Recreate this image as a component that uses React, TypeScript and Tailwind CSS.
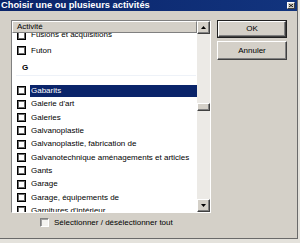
import React from "react";

type Row =
  | { kind: "item"; text: string; selected?: boolean; clipped?: boolean }
  | { kind: "group"; text: string };

const rows: Row[] = [
  { kind: "item", text: "Fusions et acquisitions", clipped: true },
  { kind: "item", text: "Futon" },
  { kind: "group", text: "G" },
  { kind: "item", text: "Gabarits", selected: true },
  { kind: "item", text: "Galerie d'art" },
  { kind: "item", text: "Galeries" },
  { kind: "item", text: "Galvanoplastie" },
  { kind: "item", text: "Galvanoplastie, fabrication de" },
  { kind: "item", text: "Galvanotechnique aménagements et articles" },
  { kind: "item", text: "Gants" },
  { kind: "item", text: "Garage" },
  { kind: "item", text: "Garage, équipements de" },
  { kind: "item", text: "Garnitures d'intérieur" },
];

function ListCheck() {
  return (
    <span className="block w-[9px] h-[9px] shrink-0 border border-black bg-white shadow-[inset_0_0_0_1px_#6a6a6a]" />
  );
}

function Arrow({ up }: { up?: boolean }) {
  return (
    <svg width="5" height="3" viewBox="0 0 5 3" className="block">
      {up ? (
        <polygon points="2.5,0 5,3 0,3" fill="#000" />
      ) : (
        <polygon points="0,0 5,0 2.5,3" fill="#000" />
      )}
    </svg>
  );
}

const raised =
  "border border-t-white border-l-white border-r-[#404040] border-b-[#404040] shadow-[inset_-1px_-1px_0_#808080]";

export default function App() {
  return (
    <div className="w-[300px] h-[243px] bg-[#e4e2dc] [font-family:'Liberation_Sans',Arial,sans-serif] text-black">
      <div className="w-[298px] h-[239px] bg-[#d4d0c8] border-r border-b border-[#6a6a6a] flex flex-col">
        {/* Title bar */}
        <div className="h-[11px] flex items-center justify-between bg-gradient-to-r from-[#0a246a] to-[#12347e] pl-px pr-[2px]">
          <span className="text-white font-bold text-[9.3px] leading-none whitespace-nowrap">
            Choisir une ou plusieurs activités
          </span>
          <span className="w-[8px] h-[7px] bg-[#d4d0c8] border border-t-white border-l-white border-r-[#404040] border-b-[#404040] flex items-center justify-center">
            <svg width="4" height="3" viewBox="0 0 4 3" className="block">
              <path d="M0 0 L4 3 M4 0 L0 3" stroke="#000" strokeWidth="0.9" />
            </svg>
          </span>
        </div>

        {/* Body */}
        <div className="flex pl-[11px] pt-[9px]">
          <div className="flex flex-col">
            {/* List box */}
            <div className="w-[200px] h-[193px] border border-t-[#808080] border-l-[#808080] border-r-white border-b-white bg-white flex">
              <div className="w-[185px] flex flex-col">
                <div className="h-[12px] bg-[#d4d0c8] border border-t-white border-l-white border-r-[#808080] border-b-[#808080] flex items-center pl-[4px]">
                  <span className="text-[8px] leading-none">Activité</span>
                </div>
                <div className="flex-1 overflow-hidden">
                  <div className="mt-[-2px] flex flex-col">
                    {rows.map((r, i) =>
                      r.kind === "group" ? (
                        <div key={i} className="h-[26.667px] flex flex-col justify-center pl-[10px]">
                          <span className="text-[8px] font-bold leading-none mt-[-1px]">{r.text}</span>
                          <span className="block h-px mt-[3px] mr-[1px] ml-[-6px] bg-[#eef2f8]" />
                        </div>
                      ) : (
                        <div
                          key={i}
                          className={
                            "h-[13.333px] flex pl-[5px] " + (r.clipped ? "items-start" : "items-center")
                          }
                        >
                          <div className={"flex flex-1 items-center " + (r.clipped ? "mt-[-2px]" : "")}>
                            <ListCheck />
                            <span
                              className={
                                "ml-[4px] flex-1 h-[12px] flex items-center pl-px text-[8px] leading-none whitespace-nowrap " +
                                (r.selected ? "bg-[#0a246a] text-white" : "")
                              }
                            >
                              {r.text}
                            </span>
                          </div>
                        </div>
                      )
                    )}
                  </div>
                </div>
              </div>
              {/* Scrollbar */}
              <div className="w-[13px] flex flex-col">
                <div className={"h-[13px] bg-[#d4d0c8] flex items-center justify-center " + raised}>
                  <Arrow up />
                </div>
                <div className="flex-1 bg-[#eceae6] flex flex-col">
                  <div className={"mt-[69px] h-[8px] bg-[#d4d0c8] " + raised} />
                </div>
                <div className={"h-[13px] bg-[#d4d0c8] flex items-center justify-center " + raised}>
                  <Arrow />
                </div>
              </div>
            </div>

            {/* Select all */}
            <div className="mt-[5px] flex items-center pl-[29px]">
              <span className="block w-[9px] h-[9px] bg-[#f4f3f0] border border-t-[#808080] border-l-[#808080] border-r-white border-b-white shadow-[inset_1px_1px_0_#a0a0a0]" />
              <span className="ml-[5px] text-[8px] leading-none whitespace-nowrap">
                Sélectionner / désélectionner tout
              </span>
            </div>
          </div>

          {/* Buttons */}
          <div className="ml-[6px] flex flex-col gap-[3px]">
            <button className="w-[70px] h-[18px] border border-[#202020] p-0 bg-[#d4d0c8]">
              <span className={"w-full h-full flex items-center justify-center text-[8px] leading-none " + raised}>
                OK
              </span>
            </button>
            <button
              className={
                "w-[70px] h-[19px] bg-[#d4d0c8] flex items-center justify-center text-[8px] leading-none " + raised
              }
            >
              Annuler
            </button>
          </div>
        </div>
      </div>
    </div>
  );
}
